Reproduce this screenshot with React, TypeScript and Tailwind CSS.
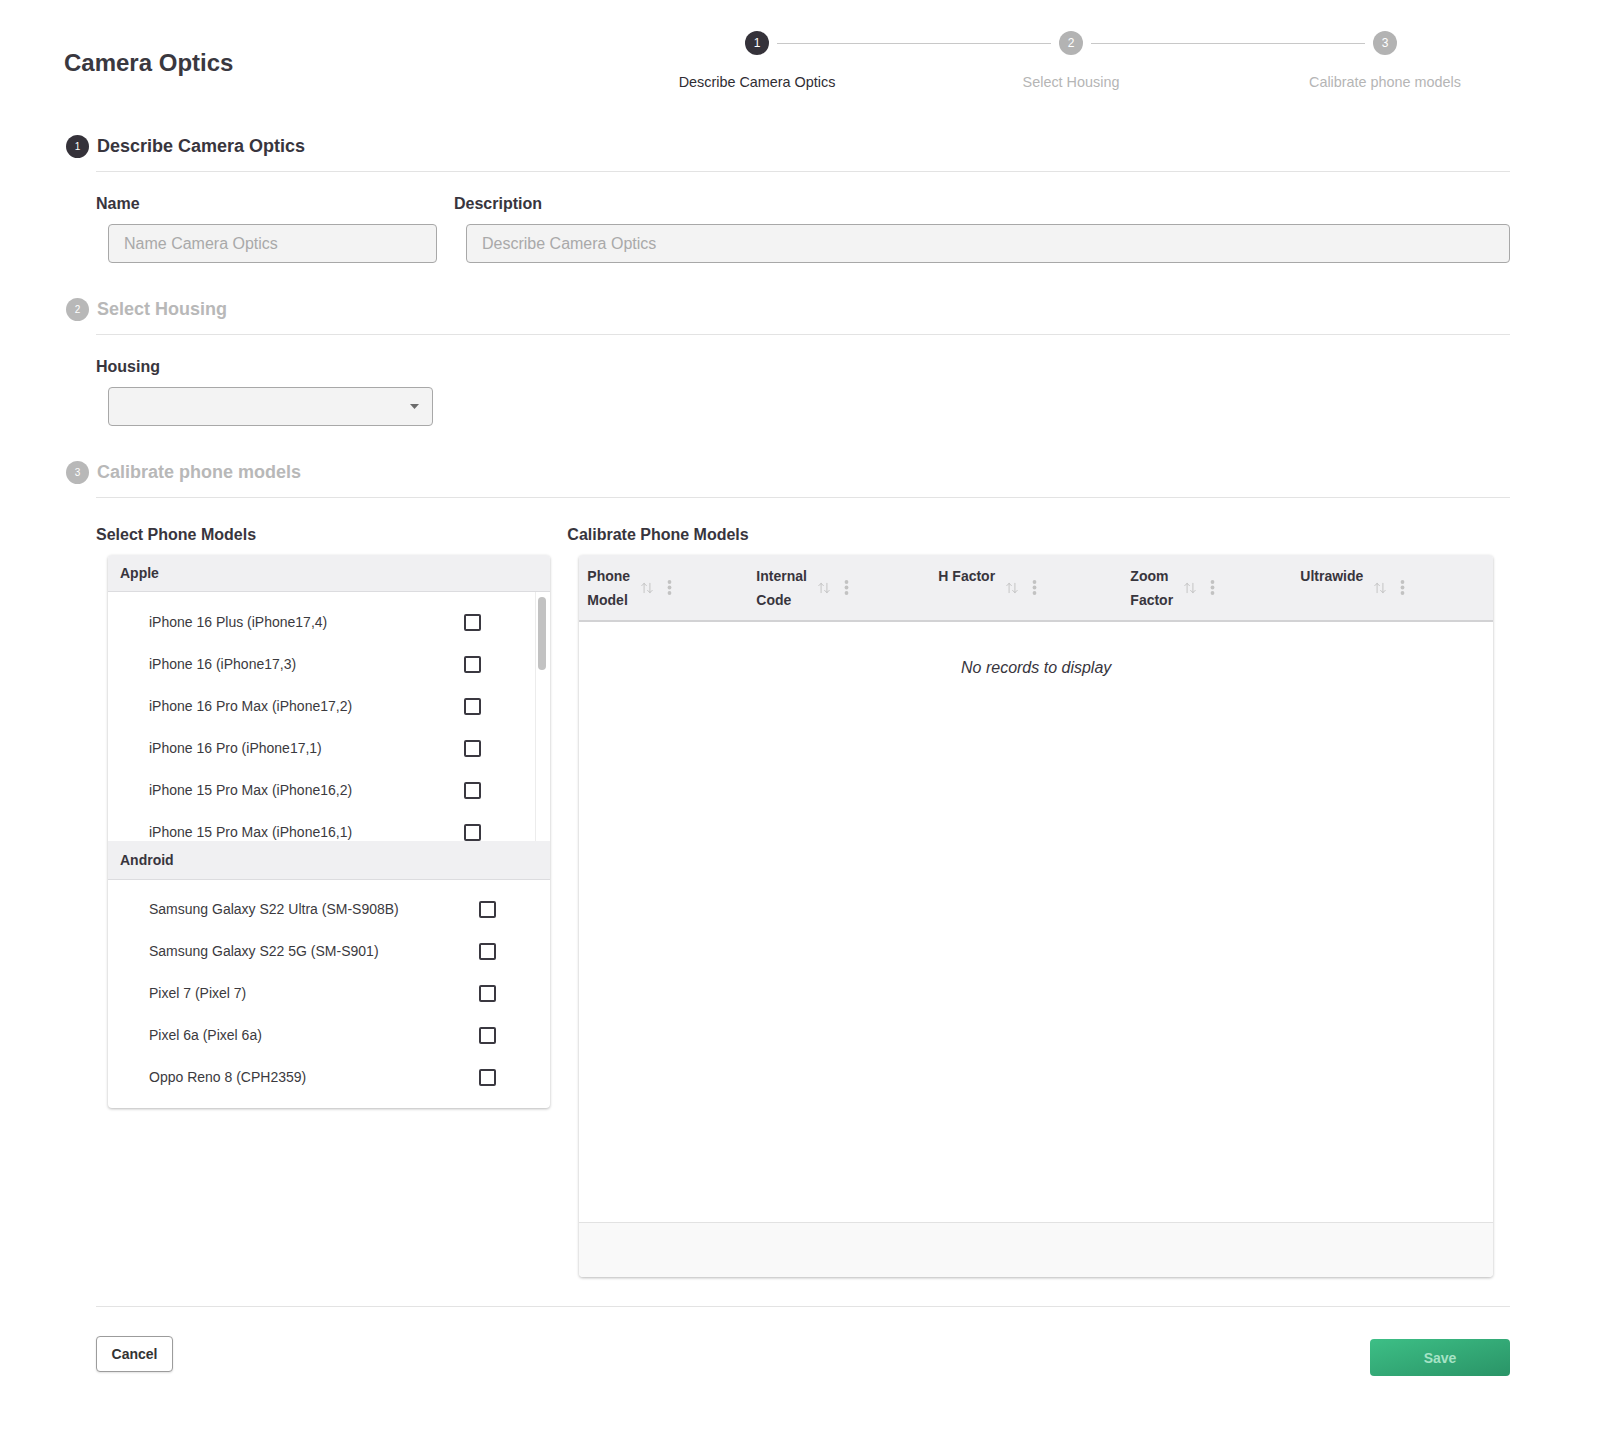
import React from 'react';
import { ArrowUpDown } from 'lucide-react';

const appleModels = [
  'iPhone 16 Plus (iPhone17,4)',
  'iPhone 16 (iPhone17,3)',
  'iPhone 16 Pro Max (iPhone17,2)',
  'iPhone 16 Pro (iPhone17,1)',
  'iPhone 15 Pro Max (iPhone16,2)',
  'iPhone 15 Pro Max (iPhone16,1)',
];

const androidModels = [
  'Samsung Galaxy S22 Ultra (SM-S908B)',
  'Samsung Galaxy S22 5G (SM-S901)',
  'Pixel 7 (Pixel 7)',
  'Pixel 6a (Pixel 6a)',
  'Oppo Reno 8 (CPH2359)',
];

const columns = [
  { lines: ['Phone', 'Model'], width: 'w-[169px]' },
  { lines: ['Internal', 'Code'], width: 'w-[182px]' },
  { lines: ['H Factor'], width: 'w-[192px]' },
  { lines: ['Zoom', 'Factor'], width: 'w-[170px]' },
  { lines: ['Ultrawide'], width: 'flex-1' },
];

const steps = ['Describe Camera Optics', 'Select Housing', 'Calibrate phone models'];

function StepDot({ n, active }: { n: number; active?: boolean }) {
  return (
    <div
      className={
        'flex h-6 w-6 shrink-0 items-center justify-center rounded-full text-xs text-white ' +
        (active ? 'bg-[#35323a]' : 'bg-[#b3b3b3]')
      }
    >
      {n}
    </div>
  );
}

function SectionHeading({ n, title, active }: { n: number; title: string; active?: boolean }) {
  return (
    <>
      <div className="ml-[2px] flex h-6 items-center gap-2">
        <div
          className={
            'flex h-[23px] w-[23px] items-center justify-center rounded-full text-[10px] text-white ' +
            (active ? 'bg-[#35323a]' : 'bg-[#b8b8b8]')
          }
        >
          {n}
        </div>
        <h2 className={'text-lg font-bold leading-6 ' + (active ? 'text-[#38353d]' : 'text-[#b8b8b8]')}>{title}</h2>
      </div>
      <div className="mx-8 mt-[13px] border-t border-[#e3e3e3]" />
    </>
  );
}

function Checkbox() {
  return <div className="h-[17px] w-[17px] shrink-0 rounded-[2px] border-2 border-[#3a3840]" />;
}

function ModelRow({ name }: { name: string }) {
  return (
    <div className="flex h-[42px] shrink-0 items-center justify-between pl-[41px] pr-[54px]">
      <span className="text-sm text-[#3b3a3e]">{name}</span>
      <Checkbox />
    </div>
  );
}

function Dots() {
  return (
    <svg width="5" height="15" viewBox="0 0 5 15" className="ml-[13px] shrink-0">
      <circle cx="2.5" cy="2" r="1.9" fill="#c2c2c2" />
      <circle cx="2.5" cy="7.5" r="1.9" fill="#c2c2c2" />
      <circle cx="2.5" cy="13" r="1.9" fill="#c2c2c2" />
    </svg>
  );
}

export default function App() {
  return (
    <div className="min-h-screen bg-white font-['Liberation_Sans',Arial,sans-serif] text-[#38353d]">
      <div className="px-16 pb-16 pt-[31px]">
        <header className="flex items-start justify-between">
          <h1 className="mt-4 text-2xl font-bold leading-8 text-[#3a383f]">Camera Optics</h1>
          <div className="w-[942px]">
            <div className="flex items-center px-[145px]">
              <StepDot n={1} active />
              <div className="mx-2 h-px flex-1 bg-[#c8c8c8]" />
              <StepDot n={2} />
              <div className="mx-2 h-px flex-1 bg-[#c8c8c8]" />
              <StepDot n={3} />
            </div>
            <div className="mt-[17px] grid grid-cols-3 text-center text-[14.4px] leading-5">
              {steps.map((s, i) => (
                <span key={s} className={i === 0 ? 'text-[#2f2d33]' : 'text-[#b5b5b5]'}>
                  {s}
                </span>
              ))}
            </div>
          </div>
        </header>

        <section className="mt-[42px]">
          <SectionHeading n={1} title="Describe Camera Optics" active />
          <div className="mt-5 flex px-8">
            <div className="w-[358px] shrink-0">
              <label className="block text-base font-bold leading-6">Name</label>
              <input
                placeholder="Name Camera Optics"
                className="ml-3 mt-2 h-[39px] w-[329px] rounded border border-[#a8a8a8] bg-[#f3f3f3] px-[15px] text-base outline-none placeholder:text-[#a9a9a9]"
              />
            </div>
            <div className="flex-1">
              <label className="block text-base font-bold leading-6">Description</label>
              <div className="ml-3 mt-2">
                <input
                  placeholder="Describe Camera Optics"
                  className="h-[39px] w-full rounded border border-[#a8a8a8] bg-[#f3f3f3] px-[15px] text-base outline-none placeholder:text-[#a9a9a9]"
                />
              </div>
            </div>
          </div>
        </section>

        <section className="mt-[34px]">
          <SectionHeading n={2} title="Select Housing" />
          <div className="mt-5 px-8">
            <label className="block text-base font-bold leading-6">Housing</label>
            <div className="ml-3 mt-2 flex h-[39px] w-[325px] items-center justify-end rounded border border-[#a8a8a8] bg-[#f3f3f3] pr-[13px]">
              <svg width="9" height="5" viewBox="0 0 9 5">
                <path d="M0 0h9L4.5 5z" fill="#6b6b6b" />
              </svg>
            </div>
          </div>
        </section>

        <section className="mt-[34px]">
          <SectionHeading n={3} title="Calibrate phone models" />
          <div className="mt-[25px] grid grid-cols-3 px-8">
            <div>
              <h3 className="text-base font-bold leading-6">Select Phone Models</h3>
              <div className="ml-3 mr-[17px] mt-2 overflow-hidden rounded bg-white shadow-[0_1px_3px_rgba(0,0,0,0.28)]">
                <div className="flex h-[37px] items-center border-b border-[#dcdcdf] bg-[#f0f0f2] px-3 text-sm font-bold">
                  Apple
                </div>
                <div className="flex h-[249px]">
                  <div className="flex flex-1 flex-col overflow-hidden pt-[9px]">
                    {appleModels.map((m, i) => (
                      <ModelRow key={m + i} name={m} />
                    ))}
                  </div>
                  <div className="w-[15px] shrink-0 border-l border-[#ececec] pl-[2px] pt-[5px]">
                    <div className="h-[73px] w-[8px] rounded-full bg-[#c2c2c2]" />
                  </div>
                </div>
                <div className="flex h-[39px] items-center border-b border-[#dcdcdf] bg-[#f0f0f2] px-3 text-sm font-bold">
                  Android
                </div>
                <div className="flex flex-col pb-[10px] pt-[8px]">
                  {androidModels.map((m) => (
                    <ModelRow key={m} name={m} />
                  ))}
                </div>
              </div>
            </div>

            <div className="col-span-2">
              <h3 className="text-base font-bold leading-6">Calibrate Phone Models</h3>
              <div className="ml-3 mr-[17px] mt-2 overflow-hidden rounded bg-white shadow-[0_1px_3px_rgba(0,0,0,0.28)]">
                <div className="flex h-[67px] border-b-2 border-[#d2d2d4] bg-[#f0f0f2]">
                  {columns.map((c) => (
                    <div key={c.lines.join(' ')} className={'flex items-center pl-2 ' + c.width}>
                      <div className="h-12 text-sm font-bold leading-6">
                        {c.lines.map((l) => (
                          <div key={l}>{l}</div>
                        ))}
                      </div>
                      <ArrowUpDown size={14} strokeWidth={1.4} className="ml-[10px] shrink-0 text-[#bcbcbc]" />
                      <Dots />
                    </div>
                  ))}
                </div>
                <div className="h-[600px] pt-[34px] text-center text-base italic leading-6">No records to display</div>
                <div className="h-[55px] border-t border-[#e2e2e2] bg-[#f9f9f9]" />
              </div>
            </div>
          </div>
        </section>

        <div className="mx-8 mt-[29px] border-t border-[#e3e3e3]" />
        <div className="mx-8 mt-[29px] flex items-start justify-between">
          <button className="h-[36px] w-[77px] rounded border border-[#9c9c9c] bg-white text-sm font-bold text-[#333] shadow-[0_1px_2px_rgba(0,0,0,0.12)]">
            Cancel
          </button>
          <button className="mt-[3px] h-[37px] w-[140px] rounded bg-gradient-to-br from-[#3dbf86] to-[#2a9467] text-sm font-bold text-[#a6e3c6]">
            Save
          </button>
        </div>
      </div>
    </div>
  );
}
